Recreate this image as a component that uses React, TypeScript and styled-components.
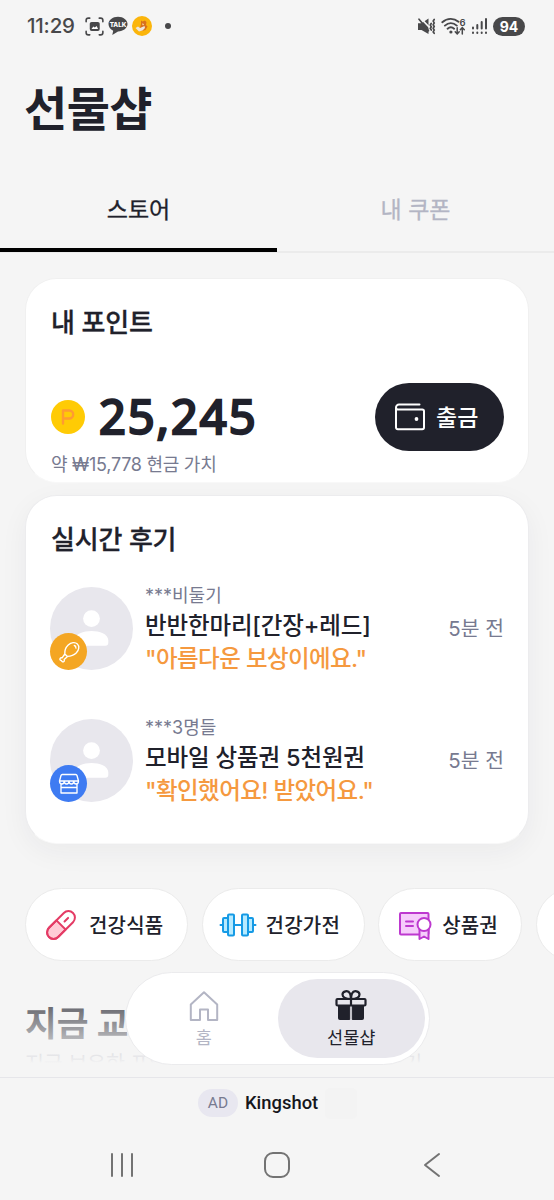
import React from "react";
import styled, { createGlobalStyle } from "styled-components";

const GlobalStyle = createGlobalStyle`
  * { box-sizing: border-box; }
  body { margin: 0; background: #f5f5f5; }
  button { border: 0; background: none; padding: 0; font: inherit; color: inherit; }
`;

const ink = "#20212b";
const muted = "#777a90";
const pale = "#b3b5c4";

const Screen = styled.div`
  width: 554px;
  height: 1200px;
  display: flex;
  flex-direction: column;
  overflow: hidden;
  background: #f5f5f5;
  color: ${ink};
  font-family: Inter, "Noto Sans CJK KR", sans-serif;
`;

const Viewport = styled.div`
  position: relative;
  height: 1077px;
  flex: none;
  display: flex;
  flex-direction: column;
  overflow: hidden;
`;

const StatusBar = styled.div`
  height: 52px;
  flex: none;
  display: flex;
  align-items: center;
  justify-content: space-between;
  padding: 0 29px 0 27px;
  color: #48484a;
`;

const StatusGroup = styled.div<{ $gap: number }>`
  display: flex;
  align-items: center;
  gap: ${(p) => p.$gap}px;
`;

const Clock = styled.span`
  width: 50px;
  margin-right: 4px;
  font: 500 20.5px/24px Inter, sans-serif;
  letter-spacing: -0.2px;
  white-space: nowrap;
`;

const Battery = styled.span`
  width: 32px;
  height: 19px;
  border-radius: 10px;
  background: #48484a;
  color: #fff;
  font: 700 14px/19px Inter, sans-serif;
  text-align: center;
`;

const Dot = styled.i`
  width: 6px;
  height: 6px;
  margin-left: 9px;
  border-radius: 50%;
  background: #48484a;
`;

const Text = styled.span<{
  $size: number;
  $line: number;
  $weight?: number;
  $color?: string;
  $stroke?: number;
  $spacing?: number;
}>`
  display: block;
  margin: 0;
  font-size: ${(p) => p.$size}px;
  line-height: ${(p) => p.$line}px;
  font-weight: ${(p) => p.$weight ?? 400};
  color: ${(p) => p.$color ?? ink};
  letter-spacing: ${(p) => p.$spacing ?? 0}px;
  -webkit-text-stroke: ${(p) => p.$stroke ?? 0}px currentColor;
  white-space: nowrap;
`;

const Header = styled.header`
  height: 114px;
  flex: none;
  padding: 23px 24px 0;
`;

const Tabs = styled.nav`
  height: 87px;
  flex: none;
  display: flex;
  box-shadow: inset 0 -2px #ebebeb;
`;

const Tab = styled.button<{ $active?: boolean }>`
  flex: 1;
  display: flex;
  justify-content: center;
  padding-top: 27px;
  border-bottom: 4px solid ${(p) => (p.$active ? "#000" : "transparent")};
  height: ${(p) => (p.$active ? 86 : 87)}px;
`;

const Cards = styled.main`
  display: flex;
  flex-direction: column;
  gap: 12px;
  padding: 25px 25px 0;
`;

const Card = styled.section<{ $height: number; $raised?: boolean }>`
  height: ${(p) => p.$height}px;
  padding: 25px 24px 0 25px;
  border: 1px solid ${(p) => (p.$raised ? "#ececee" : "#f0f0f0")};
  border-bottom-color: #f8f8f8;
  border-radius: 32px;
  background: #fff;
  box-shadow: ${(p) => (p.$raised ? "0 8px 28px rgba(30, 30, 50, 0.05)" : "none")};
`;

const PointsRow = styled.div`
  display: flex;
  justify-content: space-between;
  align-items: center;
  height: 68px;
  margin-top: 41px;
  margin-bottom: 1px;
`;

const Balance = styled.div`
  display: flex;
  align-items: center;
  gap: 12px;
`;

const Coin = styled.span`
  width: 34px;
  height: 34px;
  border-radius: 50%;
  background: #ffcb05;
  display: flex;
  align-items: center;
  justify-content: center;
`;

const Amount = styled.span`
  font: 400 47px/60px "Noto Sans", sans-serif;
  letter-spacing: 1.9px;
  -webkit-text-stroke: 2.4px currentColor;
  stroke-linejoin: round;
  margin: -2px 0 0 2px;
  white-space: nowrap;
`;

const Withdraw = styled.button`
  width: 129px;
  height: 68px;
  border-radius: 34px;
  background: ${ink};
  display: flex;
  align-items: center;
  gap: 11px;
  padding-left: 20px;
`;

const WithdrawLabel = styled(Text)`
  padding-top: 2px;
`;

const Review = styled.article`
  display: flex;
  height: 83px;
  gap: 12px;
  margin-top: 49px;
  &:first-of-type { margin-top: 28px; }
`;

const Avatar = styled.div`
  position: relative;
  width: 83px;
  height: 83px;
  flex: none;
  margin-left: -1px;
`;

const AvatarBadge = styled.span<{ $color: string }>`
  position: absolute;
  left: 0;
  bottom: 0;
  width: 37px;
  height: 37px;
  border-radius: 50%;
  background: ${(p) => p.$color};
  display: flex;
  align-items: center;
  justify-content: center;
`;

const ReviewBody = styled.div`
  flex: 1;
  margin-top: -4px;
`;

const Chips = styled.div`
  display: flex;
  gap: 13.2px;
  flex: none;
  margin-top: 44px;
  padding-left: 25px;
`;

const Chip = styled.button<{ $width: number }>`
  width: ${(p) => p.$width}px;
  height: 73px;
  flex: none;
  display: flex;
  align-items: center;
  gap: 9px;
  padding-left: 16px;
  border: 1px solid #ebebeb;
  border-radius: 38px;
  background: #fff;
`;

const ChipLabel = styled(Text)`
  padding-top: 3px;
`;

const NextSection = styled.section`
  padding: 37px 25px 0;
`;

const Fade = styled.div`
  position: absolute;
  left: 0;
  right: 0;
  bottom: 0;
  height: 103px;
  background: linear-gradient(rgba(245, 245, 245, 0) 0, rgba(245, 245, 245, 0.92) 86px, #f5f5f5 89px);
`;

const FloatingNav = styled.nav`
  position: absolute;
  left: 125px;
  bottom: 12px;
  width: 305px;
  height: 93px;
  display: flex;
  padding: 6px 4px;
  border: 1px solid #ebebed;
  border-radius: 47px;
  background: #fff;
`;

const NavItem = styled.button<{ $active?: boolean }>`
  width: 148px;
  height: 79px;
  border-radius: 40px;
  display: flex;
  flex-direction: column;
  align-items: center;
  gap: 4px;
  padding-top: 10px;
  background: ${(p) => (p.$active ? "#e8e7ed" : "transparent")};
`;

const AdBar = styled.footer`
  height: 53px;
  flex: none;
  display: flex;
  align-items: center;
  padding: 0 0 2px 198px;
  border-top: 1px solid #e6e6ea;
  gap: 7px;
`;

const AdTag = styled.span`
  width: 40px;
  height: 28px;
  border-radius: 14px;
  background: #e8e7f0;
  color: ${muted};
  font: 400 15.5px/29px Roboto, sans-serif;
  text-align: center;
`;

const AdName = styled.span`
  font: 500 18.4px/28px Roboto, sans-serif;
  margin-top: -1px;
  color: #15161c;
`;

const AdThumb = styled.i`
  width: 32px;
  height: 31px;
  border-radius: 5px;
  background: #f3f3f3;
`;

const SystemNav = styled.div`
  height: 70px;
  display: flex;
  align-items: center;
  justify-content: space-between;
  padding: 0 107px;
`;

const CaptureIcon = () => (
  <svg width="19" height="19" viewBox="0 0 20 20" fill="none" stroke="#48484a" strokeWidth="1.7" strokeLinecap="round">
    <path d="M1.2 5V3.5a2.3 2.3 0 0 1 2.3-2.3H5M15 1.2h1.5a2.3 2.3 0 0 1 2.3 2.3V5M18.8 15v1.5a2.3 2.3 0 0 1-2.3 2.3H15M5 18.8H3.5a2.3 2.3 0 0 1-2.3-2.3V15" />
    <rect x="5" y="5.2" width="10.500" height="9.500" rx="2" fill="#48484a" stroke="none" />
    <path d="m6.800 12.500 2-2.500 1.500 1 2-1.600 1.400 3.100z" fill="#fff" stroke="none" />
  </svg>
);

const TalkIcon = () => (
  <svg width="20" height="20" viewBox="0 0 20 20">
    <path d="M10 .8c5.400 0 9.500 3.300 9.500 7.300s-4.100 7.300-9.500 7.300L4.300 19l.9-4.300C2.400 13.500.5 11 .5 8.100.5 4.100 4.600.8 10 .8z" fill="#48484a" />
    <text x="10" y="10.500" fontSize="6.300" fontWeight="800" textAnchor="middle" fill="#fff" fontFamily="Inter, sans-serif">TALK</text>
  </svg>
);

const MascotIcon = () => (
  <svg width="20" height="20" viewBox="0 0 20 20">
    <circle cx="10" cy="10" r="10" fill="#fbb50b" />
    <path d="m9 4.500 1.500 1 2.500-1 1.500 1.500-.5 3 1.500 1.500-2 3.500-4 1-2-2 1-3 .5-2z" fill="#d9711c" />
    <path d="m3.500 12 2.500-1.500 2 1.500 4.500-2 .5 2-2.500 2.500-3.500 1z" fill="#eee6dc" />
    <path d="m10 7.500 2 .5-1 1.500z" fill="#fff0c8" />
  </svg>
);

const MuteIcon = () => (
  <svg width="19" height="19" viewBox="0 0 19 19" fill="none" stroke="#48484a" strokeLinecap="round">
    <path d="M1 6.200h3.500l7-4.700v15.500L4.500 13H1z" fill="#48484a" stroke="none" />
    <path d="m3.500 1 10 10.500" stroke="#f5f5f5" strokeWidth="1.800" />
    <path d="m2 2.200 9.500 11.500" strokeWidth="1.700" />
    <path d="m14.200 6.500-.9 1.500 1 1.700-1 1.800 1 1.500M17.200 2.500l-1 1.600 1 1.800-1 1.800 1 1.800-1 1.800 1 1.800-1 1.800 1 1.400" strokeWidth="1.700" />
  </svg>
);

const WifiIcon = () => (
  <svg width="25" height="19" viewBox="0 0 25 19" fill="none" stroke="#48484a" strokeWidth="1.900" strokeLinecap="round">
    <path d="M1.300 5.200c5-4.300 11.500-4.300 16.200-.5M3.900 8.600c3.600-3.200 8.300-3.200 11.900 0M6.600 11.700c2.200-1.900 4.300-1.900 6.500 0" />
    <circle cx="9.900" cy="15" r="1.600" fill="#48484a" stroke="none" />
    <path d="M16.200 10.800v6m-2-2 2 2.200 2-2.200M21.300 17v-6.200m-2 2 2-2.200 2 2.200" strokeWidth="1.500" />
    <text x="21.500" y="8.500" fontSize="9.500" fontWeight="600" textAnchor="middle" fill="#48484a" stroke="none" fontFamily="Inter, sans-serif">6</text>
  </svg>
);

const SignalIcon = () => (
  <svg width="17" height="18" viewBox="0 0 17 18" stroke="#48484a" strokeWidth="2" strokeLinecap="round">
    <path d="M2 10.500v1M6.300 8v3.500M10.700 5v6.500M15 2v9.500M2 15.500v.6M6.300 15.500v.6M10.700 15.500v.6M15 15.500v.6" />
  </svg>
);

const CoinMark = () => (
  <svg width="16" height="18" viewBox="0 0 16 18" fill="none" stroke="#ff9b32" strokeWidth="2.400" strokeLinecap="round" strokeLinejoin="round">
    <path d="M3 15.500V2.500h6.200a4 4 0 0 1 0 8H3" />
  </svg>
);

const WalletIcon = () => (
  <svg width="30" height="28" viewBox="0 0 30 28" fill="none" stroke="#fff" strokeWidth="2" strokeLinecap="round" strokeLinejoin="round">
    <path d="M24.500 1.500H4a3 3 0 0 0-3 3v20A1.800 1.800 0 0 0 2.800 26.300h24.400a1.800 1.800 0 0 0 1.800-1.800V8.300A1.800 1.800 0 0 0 27.200 6.500H3a2 2 0 0 1-2-2" />
    <circle cx="21.500" cy="16" r="1.900" fill="#fff" stroke="none" />
  </svg>
);

const PersonIcon = () => (
  <svg width="83" height="83" viewBox="0 0 84 84" fill="#fff">
    <circle cx="42" cy="42" r="42" fill="#e8e7ed" />
    <circle cx="42" cy="32" r="8.500" />
    <path d="M25 54c0-6.500 9-9.500 17-9.500S59 47.500 59 54v2.500a3 3 0 0 1-3 3H28a3 3 0 0 1-3-3z" />
  </svg>
);

const DrumstickIcon = () => (
  <svg width="24" height="24" viewBox="0 0 24 24" fill="none" stroke="#fff" strokeWidth="1.350" strokeLinecap="round" strokeLinejoin="round">
    <path d="M7.800 14c-.2-3 .6-6.200 3.400-8.900 3-2.900 7-3.300 9.200-1.200s1.800 6.200-1.200 9.100c-2.700 2.600-5.500 3.300-8.700 3.400l-3.300 3.100c.4 1.200.1 2-.7 2.300-.9.300-1.700-.2-1.900-1.200-1.200 0-1.900-.8-1.700-1.700.3-1 1.200-1.300 2.200-1zM7.800 14l2.700 2.400" />
    <path d="M17.300 5.500c1.200.3 1.700 1.300 1.600 2.600" />
  </svg>
);

const StoreIcon = () => (
  <svg width="22" height="22" viewBox="0 0 22 22" fill="none" stroke="#fff" strokeWidth="1.350" strokeLinejoin="round">
    <path d="M4.300 1.500h13.400a1.400 1.400 0 0 1 1.300 1l1.500 5.500H1.500L3 2.500a1.400 1.400 0 0 1 1.300-1zM1.500 8c0 4 4.750 4 4.750 0 0 4 4.750 4 4.750 0 0 4 4.750 4 4.750 0 0 4 4.750 4 4.750 0M3 11.500V20h16v-8.500M3 14.500h16" />
  </svg>
);

const PillIcon = () => (
  <svg width="38" height="38" viewBox="0 0 38 38" fill="none" stroke="#e43b65" strokeWidth="2" strokeLinecap="round">
    <g transform="rotate(-45 19 19)">
      <path d="M19 12.500H8.500a6.500 6.500 0 0 0 0 13H19z" fill="#ffccd7" />
      <rect x="2" y="12.500" width="34" height="13" rx="6.500" />
      <path d="M24 19h5" />
    </g>
  </svg>
);

const DumbbellIcon = () => (
  <svg width="38" height="38" viewBox="0 0 38 38" fill="#b6eaff" stroke="#159ae5" strokeWidth="2" strokeLinejoin="round" strokeLinecap="round">
    <path d="M1.500 19H4M15 19h8M34 19h2.500" />
    <rect x="4" y="12" width="5" height="14" rx="1" />
    <rect x="29" y="12" width="5" height="14" rx="1" />
    <rect x="9" y="8.500" width="6" height="21" rx="1" />
    <rect x="23" y="8.500" width="6" height="21" rx="1" />
  </svg>
);

const CertificateIcon = () => (
  <svg width="38" height="38" viewBox="0 0 38 38" fill="none" stroke="#bd38cf" strokeWidth="2" strokeLinejoin="round" strokeLinecap="round">
    <rect x="5" y="7" width="28.500" height="21.500" rx="1" fill="#f6ccfb" />
    <path d="M11 15.500h7M11 20h7" />
    <path d="M24.500 23v10l4.500-2.500 4.500 2.500V23z" fill="#f6ccfb" />
    <circle cx="29" cy="18.500" r="6.500" fill="#fff" />
  </svg>
);

const HomeIcon = () => (
  <svg width="30" height="32" viewBox="0 0 30 32" fill="none" stroke={pale} strokeWidth="2" strokeLinejoin="round">
    <path d="M1.800 15.500 15 3.200l13.200 12.300V31H19V20.500h-8V31H1.800z" />
  </svg>
);

const GiftIcon = () => (
  <svg width="32" height="32" viewBox="0 0 32 32" fill="none" stroke={ink} strokeWidth="2.200" strokeLinejoin="round">
    <path d="M16 10C11 10 7.500 8.500 7.500 5.500S13 .5 15 4.500c.8 1.600 1 5.500 1 5.500s.2-3.900 1-5.500c2-4 7.500-2 7.500 1S21 10 16 10z" />
    <rect x="1.500" y="10" width="29" height="6.500" rx="1" />
    <path d="M3.500 16.500h11.200V30.500H4.500a1 1 0 0 1-1-1zM17.300 16.500h11.200V29.500a1 1 0 0 1-1 1H17.300z" fill={ink} strokeWidth="1" />
    <path d="M16 10v6.500" />
  </svg>
);

const reviews = [
  { user: "***비둘기", item: "반반한마리[간장+레드]", quote: '"아름다운 보상이에요."', color: "#f4a623", icon: <DrumstickIcon /> },
  { user: "***3명들", item: "모바일 상품권 5천원권", quote: '"확인했어요! 받았어요."', color: "#3e7bf2", icon: <StoreIcon /> },
];

const categories = [
  { label: "건강식품", width: 163.4, icon: <PillIcon /> },
  { label: "건강가전", width: 163.4, icon: <DumbbellIcon /> },
  { label: "상품권", width: 144.2, icon: <CertificateIcon /> },
  { label: "", width: 163.4, icon: null },
];

export default function App() {
  return (
    <>
      <GlobalStyle />
      <Screen>
        <Viewport>
          <StatusBar>
            <StatusGroup $gap={4}>
              <Clock>11:29</Clock>
              <CaptureIcon />
              <TalkIcon />
              <MascotIcon />
              <Dot />
            </StatusGroup>
            <StatusGroup $gap={5}>
              <MuteIcon />
              <WifiIcon />
              <SignalIcon />
              <Battery>94</Battery>
            </StatusGroup>
          </StatusBar>
          <Header>
            <Text as="h1" $size={47} $line={68} $weight={700} $spacing={-0.6}>선물샵</Text>
          </Header>
          <Tabs>
            <Tab $active><Text $size={23} $line={34} $stroke={0.3}>스토어</Text></Tab>
            <Tab><Text $size={23} $line={34} $color={pale} $stroke={0.3}>내 쿠폰</Text></Tab>
          </Tabs>
          <Cards>
            <Card $height={205}>
              <Text $size={26} $line={38} $weight={500} $stroke={0.3} $spacing={-0.2}>내 포인트</Text>
              <PointsRow>
                <Balance>
                  <Coin><CoinMark /></Coin>
                  <Amount>25,245</Amount>
                </Balance>
                <Withdraw>
                  <WalletIcon />
                  <WithdrawLabel $size={23} $line={34} $weight={500} $color="#fff">출금</WithdrawLabel>
                </Withdraw>
              </PointsRow>
              <Text $size={18} $line={26} $color={muted} $spacing={-0.27}>약 ₩15,778 현금 가치</Text>
            </Card>
            <Card $height={349} $raised>
              <Text $size={26} $line={38} $weight={500} $stroke={0.3} $spacing={-0.2}>실시간 후기</Text>
              {reviews.map((r) => (
                <Review key={r.user}>
                  <Avatar>
                    <PersonIcon />
                    <AvatarBadge $color={r.color}>{r.icon}</AvatarBadge>
                  </Avatar>
                  <ReviewBody>
                    <Text $size={18} $line={26} $color={muted}>{r.user}</Text>
                    <Text $size={23.5} $line={33} $weight={500} $spacing={-0.15}>{r.item}</Text>
                    <Text $size={23.5} $line={33} $weight={500} $color="#f5993f" $spacing={-0.58}>{r.quote}</Text>
                  </ReviewBody>
                  <Text $size={20.4} $line={84} $color={muted}>5분 전</Text>
                </Review>
              ))}
            </Card>
          </Cards>
          <Chips>
            {categories.map((c) => (
              <Chip key={c.label} $width={c.width}>
                {c.icon}
                <ChipLabel $size={20} $line={30} $weight={500} $spacing={0.2}>{c.label}</ChipLabel>
              </Chip>
            ))}
          </Chips>
          <NextSection>
            <Text $size={34.5} $line={51} $weight={700}>지금 교환 가능한</Text>
            <Text $size={20.7} $line={29} $color={muted} $spacing={-0.2}>지금 보유한 포인트로 교환할 수 있는 상품 보기</Text>
          </NextSection>
          <Fade />
          <FloatingNav>
            <NavItem>
              <HomeIcon />
              <Text $size={17.5} $line={26} $color={pale}>홈</Text>
            </NavItem>
            <NavItem $active>
              <GiftIcon />
              <Text $size={17.5} $line={26}>선물샵</Text>
            </NavItem>
          </FloatingNav>
        </Viewport>
        <AdBar>
          <AdTag>AD</AdTag>
          <AdName>Kingshot</AdName>
          <AdThumb />
        </AdBar>
        <SystemNav>
          <svg width="30" height="30" viewBox="0 0 30 30" stroke="#737373" strokeWidth="2" strokeLinecap="round">
            <path d="M5 4v22M15 4v22M25 4v22" />
          </svg>
          <svg width="30" height="30" viewBox="0 0 30 30" fill="none" stroke="#737373" strokeWidth="2">
            <rect x="3" y="3" width="24" height="24" rx="8" />
          </svg>
          <svg width="30" height="30" viewBox="0 0 30 30" fill="none" stroke="#737373" strokeWidth="2" strokeLinecap="round" strokeLinejoin="round">
            <path d="M22 4 8 15l14 11" />
          </svg>
        </SystemNav>
      </Screen>
    </>
  );
}
